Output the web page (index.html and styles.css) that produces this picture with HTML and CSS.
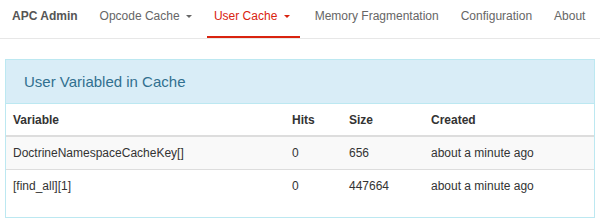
FILE: index.html
```html
<!DOCTYPE html>
<html lang="en">

<head>
    <meta charset="UTF-8">
    <meta name="viewport" content="width=device-width, initial-scale=1.0">
    <title>APC Admin - User Cache</title>
    <link rel="stylesheet" href="styles.css">
</head>

<body>
    <nav class="navbar">
        <a class="brand" href="#">APC Admin</a>
        <ul class="nav">
            <li><a class="dropdown" href="#">Opcode Cache <span class="caret"></span></a></li>
            <li class="active"><a class="dropdown" href="#">User Cache <span class="caret"></span></a></li>
            <li><a href="#">Memory Fragmentation</a></li>
            <li><a href="#">Configuration</a></li>
            <li><a href="#">About</a></li>
        </ul>
    </nav>

    <div class="container">
        <div class="panel">
            <div class="panel-heading">
                <h3 class="panel-title">User Variabled in Cache</h3>
            </div>
            <table class="table">
                <thead>
                    <tr>
                        <th class="col-var">Variable</th>
                        <th class="col-hits">Hits</th>
                        <th class="col-size">Size</th>
                        <th>Created</th>
                    </tr>
                </thead>
                <tbody>
                    <tr>
                        <td>DoctrineNamespaceCacheKey[]</td>
                        <td>0</td>
                        <td>656</td>
                        <td>about a minute ago</td>
                    </tr>
                    <tr>
                        <td>[find_all][1]</td>
                        <td>0</td>
                        <td>447664</td>
                        <td>about a minute ago</td>
                    </tr>
                </tbody>
            </table>
        </div>
    </div>
</body>

</html>
```

FILE: styles.css
```css
body {
    font-family: 'Liberation Sans', Arial, sans-serif;
    font-size: 12px;
    margin: 0;
    padding: 0;
    background: #fff;
    color: #333;
}

a {
    text-decoration: none;
}

.navbar {
    display: flex;
    height: 38px;
    border-bottom: 1px solid #e7e7e7;
}

.brand {
    padding: 9px 11px 0 12px;
    line-height: 15px;
    font-weight: bold;
    color: #555;
}

.nav {
    display: flex;
    margin: 0;
    padding: 0;
    list-style: none;
}

.nav li {
    margin: 0 4px;
    border-bottom: 2px solid transparent;
}

.nav li a {
    display: block;
    padding: 9px 7px 0;
    line-height: 15px;
    color: #666;
}

.nav li.active {
    border-bottom-color: #d9230f;
}

.nav li.active a {
    color: #d9230f;
}

.nav li.active a.dropdown {
    padding-right: 10px;
}

.caret {
    display: inline-block;
    width: 0;
    height: 0;
    margin-left: 3px;
    vertical-align: 2px;
    border-top: 3px solid;
    border-left: 3px solid transparent;
    border-right: 3px solid transparent;
}

.container {
    padding: 20px 5px 0;
}

.panel {
    border: 1px solid #bce8f1;
    padding-bottom: 15px;
}

.panel-heading {
    background: #d9edf7;
    border-bottom: 1px solid #bce8f1;
    padding: 0 18px;
    height: 43px;
    display: flex;
    align-items: center;
}

.panel-title {
    margin: 0;
    font-size: 15px;
    font-weight: normal;
    color: #31708f;
}

.table {
    width: 100%;
    border-collapse: collapse;
}

.table th,
.table td {
    text-align: left;
    padding: 0 7px;
    height: 32px;
}

.table th {
    height: 31px;
    border-bottom: 2px solid #ddd;
}

.table tbody tr + tr td {
    border-top: 1px solid #ddd;
}

.table tbody tr:nth-child(odd) {
    background: #f9f9f9;
}

.col-var {
    width: 265px;
}

.col-hits {
    width: 43px;
}

.col-size {
    width: 68px;
}
```
